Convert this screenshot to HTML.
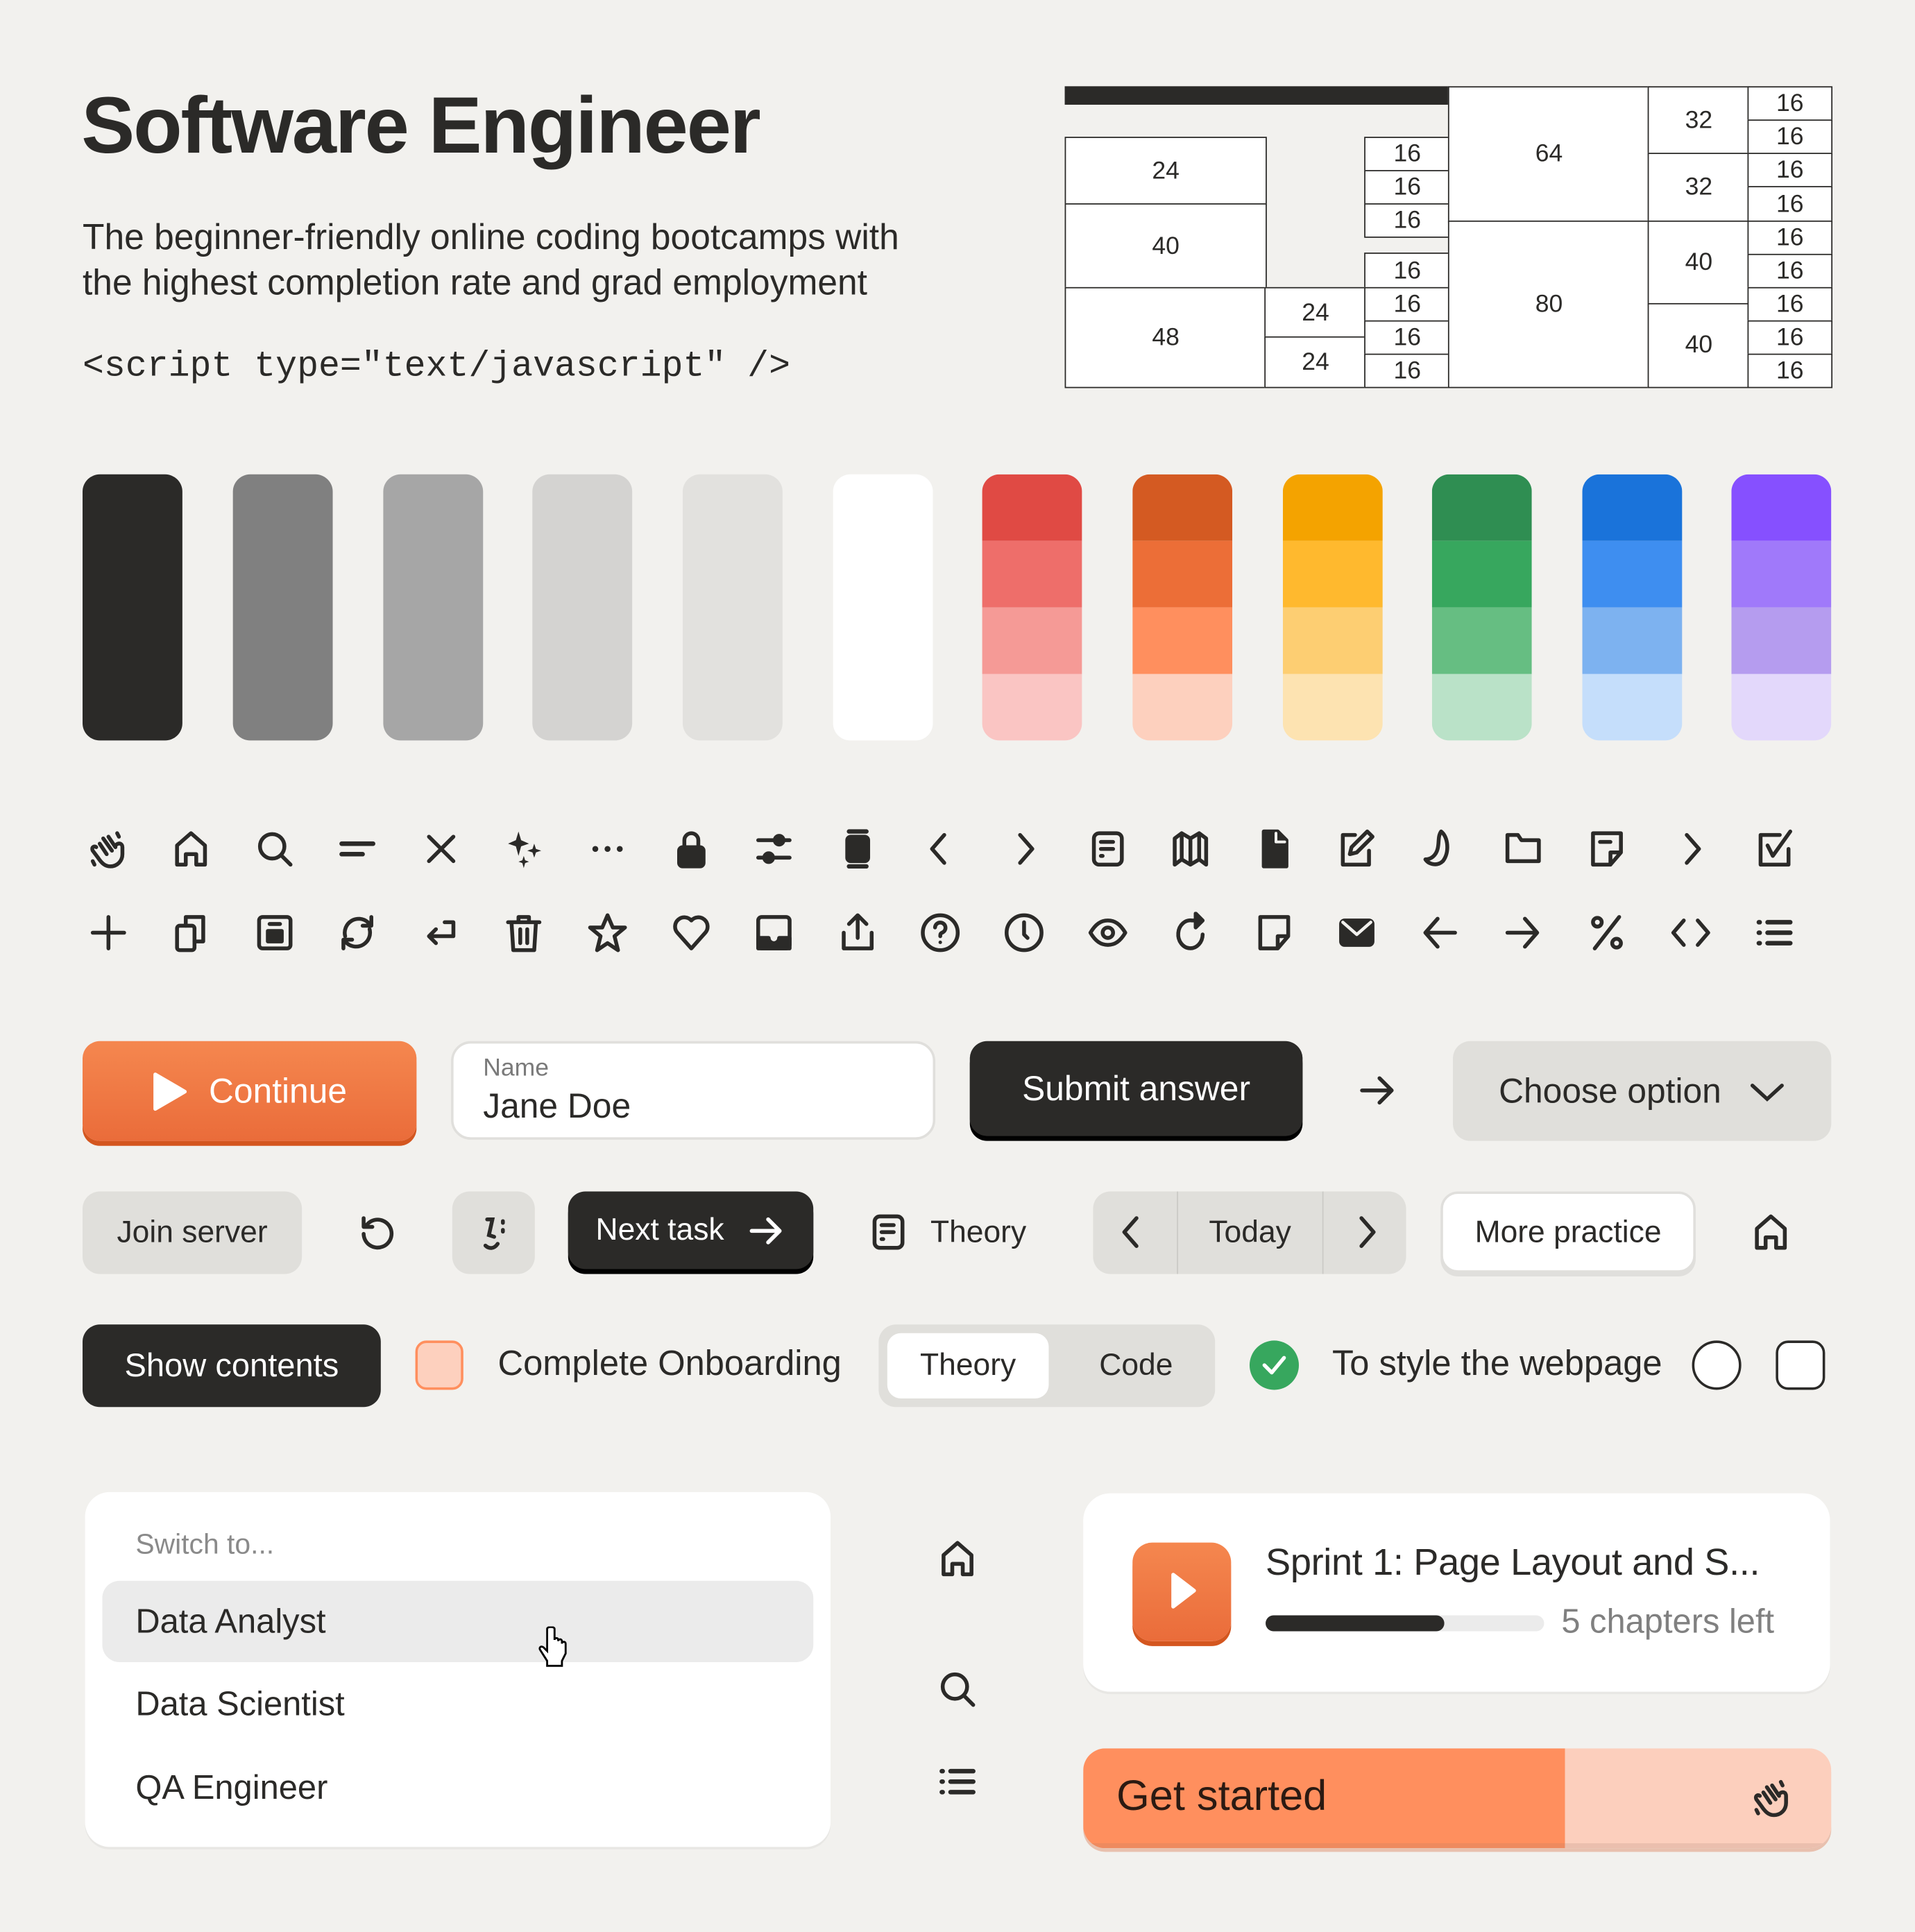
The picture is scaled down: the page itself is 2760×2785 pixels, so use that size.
<!DOCTYPE html>
<html><head><meta charset="utf-8">
<style>
*{box-sizing:border-box;margin:0;padding:0}
html,body{width:2760px;height:2784px;overflow:hidden;background:#F2F1EE}
#s{position:absolute;left:0;top:0;width:1554px;height:1568px;transform:scale(1.7761);transform-origin:0 0;font-family:"Liberation Sans",sans-serif;color:#2B2A28}
.a{position:absolute}
.c{position:absolute;border:1.6px solid #2B2A28;background:#fff;display:flex;align-items:center;justify-content:center;font-size:20px}
.sw{position:absolute;top:385px;width:81px;height:216px;border-radius:14px;overflow:hidden}
.sw div{height:54px}
.ic{position:absolute;width:34px;height:34px;margin:-17px 0 0 -17px}
.ic svg{width:34px;height:34px;fill:none;stroke:#2B2A28;stroke-width:2.2;stroke-linecap:round;stroke-linejoin:round}
.f{fill:#2B2A28!important}
.btn{position:absolute;display:flex;align-items:center;justify-content:center;border-radius:14px;font-size:26px}
</style></head><body><div id="s">
<div class="a" style="left:66px;top:64px;font-size:65px;font-weight:bold;letter-spacing:-1.2px">Software Engineer</div>
<div class="a" style="left:67px;top:175px;font-size:29px;line-height:37px">The beginner-friendly online coding bootcamps with<br>the highest completion rate and grad employment</div>
<div class="a" style="left:67px;top:281px;font-family:'Liberation Mono',monospace;font-size:29px">&lt;script type="text/javascript" /&gt;</div>

<div class="a" style="left:864px;top:70px;width:312px;height:15px;background:#2B2A28"></div>
<div class="c" style="left:864px;top:111px;width:164px;height:56px">24</div>
<div class="c" style="left:864px;top:165px;width:164px;height:70px">40</div>
<div class="c" style="left:864px;top:233px;width:164px;height:82px">48</div>
<div class="c" style="left:1026px;top:233px;width:83px;height:42px">24</div>
<div class="c" style="left:1026px;top:273px;width:83px;height:42px">24</div>
<div class="c" style="left:1107px;top:111px;width:70px;height:29px">16</div>
<div class="c" style="left:1107px;top:138px;width:70px;height:29px">16</div>
<div class="c" style="left:1107px;top:165px;width:70px;height:28px">16</div>
<div class="c" style="left:1107px;top:205px;width:70px;height:30px">16</div>
<div class="c" style="left:1107px;top:233px;width:70px;height:29px">16</div>
<div class="c" style="left:1107px;top:260px;width:70px;height:29px">16</div>
<div class="c" style="left:1107px;top:287px;width:70px;height:28px">16</div>
<div class="c" style="left:1175px;top:70px;width:164px;height:111px">64</div>
<div class="c" style="left:1175px;top:179px;width:164px;height:136px">80</div>
<div class="c" style="left:1337px;top:70px;width:83px;height:56px">32</div>
<div class="c" style="left:1337px;top:124px;width:83px;height:57px">32</div>
<div class="c" style="left:1337px;top:179px;width:83px;height:69px">40</div>
<div class="c" style="left:1337px;top:246px;width:83px;height:69px">40</div>
<div class="c" style="left:1418px;top:70px;width:69px;height:29px">16</div>
<div class="c" style="left:1418px;top:97px;width:69px;height:29px">16</div>
<div class="c" style="left:1418px;top:124px;width:69px;height:29px">16</div>
<div class="c" style="left:1418px;top:151px;width:69px;height:30px">16</div>
<div class="c" style="left:1418px;top:179px;width:69px;height:29px">16</div>
<div class="c" style="left:1418px;top:206px;width:69px;height:29px">16</div>
<div class="c" style="left:1418px;top:233px;width:69px;height:29px">16</div>
<div class="c" style="left:1418px;top:260px;width:69px;height:29px">16</div>
<div class="c" style="left:1418px;top:287px;width:69px;height:28px">16</div>

<div class="sw" style="left:67px;background:#2B2A28"></div>
<div class="sw" style="left:189px;background:#808080"></div>
<div class="sw" style="left:311px;background:#A6A6A6"></div>
<div class="sw" style="left:432px;background:#D4D3D1"></div>
<div class="sw" style="left:554px;background:#E2E1DE"></div>
<div class="sw" style="left:676px;background:#FFFFFF"></div>
<div class="sw" style="left:797px"><div style="background:#E04A44"></div><div style="background:#EE6E6A"></div><div style="background:#F59A96"></div><div style="background:#FAC5C3"></div></div>
<div class="sw" style="left:919px"><div style="background:#D45A22"></div><div style="background:#EC6E37"></div><div style="background:#FF8F5E"></div><div style="background:#FDD0BE"></div></div>
<div class="sw" style="left:1041px"><div style="background:#F4A300"></div><div style="background:#FFB92E"></div><div style="background:#FDCE72"></div><div style="background:#FDE3B1"></div></div>
<div class="sw" style="left:1162px"><div style="background:#2F8E52"></div><div style="background:#37A75E"></div><div style="background:#66BE82"></div><div style="background:#BAE2C8"></div></div>
<div class="sw" style="left:1284px"><div style="background:#1A73DA"></div><div style="background:#3E8EF0"></div><div style="background:#7DB2F0"></div><div style="background:#C5DEFB"></div></div>
<div class="sw" style="left:1405px"><div style="background:#8650FF"></div><div style="background:#A079FA"></div><div style="background:#B59CEF"></div><div style="background:#E3D8FB"></div></div>

<!-- icons row 1 -->
<div class="ic" style="left:88px;top:689px"><svg viewBox="0 0 24 24"><path d="M7 9l4 6M9 6l5 7M12 5l4 6M16 10c2-2 4-1 4 1v4c0 4-3 7-7 7-3 0-5-2-7-5l-3-4c-1-2 1-3 2-2M17 3l1 2M3 19l1 2"/></svg></div>
<div class="ic" style="left:155px;top:689px"><svg viewBox="0 0 24 24"><path d="M4 21V10l8-7 8 7v11h-5v-6h-6v6z"/></svg></div>
<div class="ic" style="left:223px;top:689px"><svg viewBox="0 0 24 24"><circle cx="10.5" cy="10.5" r="7"/><path d="M16 16l5 5"/></svg></div>
<div class="ic" style="left:290px;top:689px"><svg viewBox="0 0 24 24"><path d="M3 9h18M3 15h12" stroke-width="2.6"/></svg></div>
<div class="ic" style="left:358px;top:689px"><svg viewBox="0 0 24 24"><path d="M5 5l14 14M19 5L5 19"/></svg></div>
<div class="ic" style="left:425px;top:689px"><svg viewBox="0 0 24 24"><path class="f" d="M9 2l1.5 5L15 9l-4.5 1.5L9 16l-1.5-5.5L3 9l4.5-2zM18 9l1 3 3 1-3 1-1 3-1-3-3-1 3-1zM12 16l.8 2.5 2.2.8-2.2.8L12 23l-.8-2.9-2.2-.8 2.2-.8z" stroke="none"/></svg></div>
<div class="ic" style="left:493px;top:689px"><svg viewBox="0 0 24 24"><circle class="f" cx="5" cy="12" r="1.7" stroke="none"/><circle class="f" cx="12" cy="12" r="1.7" stroke="none"/><circle class="f" cx="19" cy="12" r="1.7" stroke="none"/></svg></div>
<div class="ic" style="left:561px;top:689px"><svg viewBox="0 0 24 24"><rect class="f" x="5" y="11" width="14" height="11" rx="2"/><path d="M8 11V7a4 4 0 0 1 8 0v4"/></svg></div>
<div class="ic" style="left:628px;top:689px"><svg viewBox="0 0 24 24"><path d="M3 7h18M3 17h18"/><circle class="f" cx="15" cy="7" r="2.5"/><circle class="f" cx="9" cy="17" r="2.5"/></svg></div>
<div class="ic" style="left:696px;top:689px"><svg viewBox="0 0 24 24"><rect class="f" x="6" y="5" width="12" height="14" rx="2"/><path d="M7 2h10M7 22h10" stroke-width="2.5"/></svg></div>
<div class="ic" style="left:762px;top:689px"><svg viewBox="0 0 24 24"><path d="M15 4l-7 8 7 8"/></svg></div>
<div class="ic" style="left:832px;top:689px"><svg viewBox="0 0 24 24"><path d="M9 4l7 8-7 8"/></svg></div>
<div class="ic" style="left:899px;top:689px"><svg viewBox="0 0 24 24"><rect x="4" y="3" width="16" height="18" rx="3"/><path d="M8 8h7M8 12h7M8 16h1"/></svg></div>
<div class="ic" style="left:966px;top:689px"><svg viewBox="0 0 24 24"><path d="M3 6l4-3 5 3 5-3 4 3v15l-4-3-5 3-5-3-4 3z M7 3v15M17 3v15M12 6v15"/></svg></div>
<div class="ic" style="left:1034px;top:689px"><svg viewBox="0 0 24 24"><path class="f" d="M6 2h8l5 5v15H6z"/><path d="M13 3v5h5" stroke="#F2F1EE" stroke-width="1.6"/></svg></div>
<div class="ic" style="left:1101px;top:689px"><svg viewBox="0 0 24 24"><path d="M11 4H4v17h15v-8M18 2l3 3-9 9-4 1 1-4z"/></svg></div>
<div class="ic" style="left:1168px;top:689px"><svg viewBox="0 0 24 24"><path d="M13 2c4 3 5 12 1 17-3 3-8 2-10-1 3 0 6-2 7-6 1-4 0-7 2-10z"/></svg></div>
<div class="ic" style="left:1236px;top:689px"><svg viewBox="0 0 24 24"><path d="M3 4h6l2 3h10v12H3z"/></svg></div>
<div class="ic" style="left:1304px;top:689px"><svg viewBox="0 0 24 24"><path d="M14 21H4V3h16v11l-6 7v-7h6M8 8h6"/></svg></div>
<div class="ic" style="left:1373px;top:689px"><svg viewBox="0 0 24 24"><path d="M9 4l7 8-7 8"/></svg></div>
<div class="ic" style="left:1440px;top:689px"><svg viewBox="0 0 24 24"><path d="M20 12v9H4V4h11M8 10l3 6 10-14"/></svg></div>
<!-- row 2 -->
<div class="ic" style="left:88px;top:757px"><svg viewBox="0 0 24 24"><path d="M12 3v18M3 12h18"/></svg></div>
<div class="ic" style="left:155px;top:757px"><svg viewBox="0 0 24 24"><rect x="4" y="8" width="10" height="14" rx="1.5"/><path d="M9 8V3h10v14h-5"/></svg></div>
<div class="ic" style="left:223px;top:757px"><svg viewBox="0 0 24 24"><rect x="3" y="3" width="18" height="18" rx="2"/><rect class="f" x="8" y="11" width="8" height="6"/><path d="M9 7h6"/></svg></div>
<div class="ic" style="left:290px;top:757px"><svg viewBox="0 0 24 24"><path d="M5 14a8 8 0 0 1 13-8l2 2M19 10a8 8 0 0 1-13 8l-2-2M20 3v5h-5M4 21v-5h5"/></svg></div>
<div class="ic" style="left:358px;top:757px"><svg viewBox="0 0 24 24"><path d="M14 6h5v8H5M9 10l-4 4 4 4"/></svg></div>
<div class="ic" style="left:425px;top:757px"><svg viewBox="0 0 24 24"><path d="M3 6h18M9 6V3h6v3M5 6l1 16h12l1-16M10 10v8M14 10v8"/></svg></div>
<div class="ic" style="left:493px;top:757px"><svg viewBox="0 0 24 24"><path d="M12 2l3 7h7l-6 5 2 8-6-4-6 4 2-8-6-5h7z"/></svg></div>
<div class="ic" style="left:561px;top:757px"><svg viewBox="0 0 24 24"><path d="M12 21L4 12a5 5 0 0 1 8-7 5 5 0 0 1 8 7z"/></svg></div>
<div class="ic" style="left:628px;top:757px"><svg viewBox="0 0 24 24"><rect x="3" y="3" width="18" height="18" rx="2"/><path class="f" d="M3 15h6a3 3 0 0 0 6 0h6v6H3z"/></svg></div>
<div class="ic" style="left:696px;top:757px"><svg viewBox="0 0 24 24"><path d="M4 12v9h16v-9M12 15V2M7 7l5-5 5 5"/></svg></div>
<div class="ic" style="left:763px;top:757px"><svg viewBox="0 0 24 24"><circle cx="12" cy="12" r="10"/><path d="M9 9a3 3 0 1 1 4 3c-1 .5-1 1-1 2"/><circle class="f" cx="12" cy="17.5" r="1" stroke="none"/></svg></div>
<div class="ic" style="left:831px;top:757px"><svg viewBox="0 0 24 24"><circle cx="12" cy="12" r="10"/><path d="M12 6v7l2 2"/></svg></div>
<div class="ic" style="left:899px;top:757px"><svg viewBox="0 0 24 24"><path d="M2 12c3-5 6-7 10-7s7 2 10 7c-3 5-6 7-10 7s-7-2-10-7z"/><circle cx="12" cy="12" r="3"/></svg></div>
<div class="ic" style="left:966px;top:757px"><svg viewBox="0 0 24 24"><path d="M19 13a7 8 0 1 1-6-8h3"/><path class="f" d="M15 1l4 4-4 4z"/></svg></div>
<div class="ic" style="left:1034px;top:757px"><svg viewBox="0 0 24 24"><path d="M14 21H4V3h16v11l-6 7v-7h6"/></svg></div>
<div class="ic" style="left:1101px;top:757px"><svg viewBox="0 0 24 24"><rect class="f" x="3" y="5" width="18" height="14" rx="2"/><path d="M4 6l8 7 8-7" stroke="#F2F1EE" stroke-width="1.8"/></svg></div>
<div class="ic" style="left:1168px;top:757px"><svg viewBox="0 0 24 24"><path d="M21 12H4M11 4l-7 8 7 8"/></svg></div>
<div class="ic" style="left:1236px;top:757px"><svg viewBox="0 0 24 24"><path d="M3 12h17M13 4l7 8-7 8"/></svg></div>
<div class="ic" style="left:1304px;top:757px"><svg viewBox="0 0 24 24"><path d="M19 3L5 21"/><circle cx="6.5" cy="6" r="2.5"/><circle cx="17.5" cy="18" r="2.5"/></svg></div>
<div class="ic" style="left:1372px;top:757px"><svg viewBox="0 0 24 24"><path d="M8 5l-6 7 6 7M16 5l6 7-6 7"/></svg></div>
<div class="ic" style="left:1440px;top:757px"><svg viewBox="0 0 24 24"><path d="M8 6h13M8 12h13M8 18h13M3 6h.5M3 12h.5M3 18h.5" stroke-width="2.6"/></svg></div>

<!-- buttons row 1 -->
<div class="btn" style="left:67px;top:845px;width:271px;height:81px;background:linear-gradient(#F5874F,#EA6C3A);box-shadow:0 4px 0 #D4561F;color:#fff;font-size:28px"><svg width="30" height="32" viewBox="0 0 30 32" style="margin-right:16px"><path d="M3 2l24 14L3 30z" fill="#fff" stroke="#fff" stroke-width="3" stroke-linejoin="round"/></svg>Continue</div>
<div class="a" style="left:366px;top:845px;width:393px;height:80px;background:#fff;border:2px solid #E0DFDC;border-radius:16px"></div>
<div class="a" style="left:392px;top:856px;font-size:20px;color:#7A7A7A">Name</div>
<div class="a" style="left:392px;top:882px;font-size:28px">Jane Doe</div>
<div class="btn" style="left:787px;top:845px;width:270px;height:77px;background:#2B2A28;box-shadow:0 4px 0 #000;color:#fff;font-size:28px">Submit answer</div>
<div class="ic" style="left:1118px;top:885px"><svg viewBox="0 0 24 24"><path d="M3 12h17M13 5l7 7-7 7"/></svg></div>
<div class="btn" style="left:1179px;top:845px;width:307px;height:81px;background:#E0DFDB;font-size:28px">Choose option<svg width="30" height="20" viewBox="0 0 30 20" style="margin-left:22px"><path d="M3 5l12 11 12-11" fill="none" stroke="#2B2A28" stroke-width="3" stroke-linecap="round"/></svg></div>

<!-- row 2 -->
<div class="btn" style="left:67px;top:967px;width:178px;height:67px;background:#E0DFDB;font-size:25px">Join server</div>
<div class="ic" style="left:305px;top:1000px"><svg viewBox="0 0 24 24"><path d="M6 9a8 8 0 1 1-1 4M5 4v5h5"/></svg></div>
<div class="btn" style="left:367px;top:967px;width:67px;height:67px;background:#E0DFDB"><svg width="34" height="34" viewBox="0 0 24 24" fill="none" stroke="#2B2A28" stroke-width="2.2" stroke-linecap="round"><path d="M8 4h3l-2 9 3 1M7 19c2 2 5 2 7-1M17 5v1M17 10v1"/></svg></div>
<div class="btn" style="left:461px;top:967px;width:199px;height:63px;background:#2B2A28;box-shadow:0 4px 0 #000;color:#fff;font-size:25px">Next task<svg width="32" height="32" viewBox="0 0 24 24" fill="none" stroke="#fff" stroke-width="2.4" stroke-linecap="round" stroke-linejoin="round" style="margin-left:18px"><path d="M3 12h17M13 5l7 7-7 7"/></svg></div>
<div class="ic" style="left:721px;top:1000px"><svg viewBox="0 0 24 24"><rect x="4" y="3" width="16" height="18" rx="3"/><path d="M8 8h7M8 12h7M8 16h1"/></svg></div>
<div class="a" style="left:755px;top:986px;font-size:25px">Theory</div>
<div class="a" style="left:887px;top:967px;width:254px;height:67px;background:#E0DFDB;border-radius:14px"></div>
<div class="a" style="left:955px;top:967px;width:1px;height:67px;background:#CBCAC6"></div>
<div class="a" style="left:1073px;top:967px;width:1px;height:67px;background:#CBCAC6"></div>
<div class="ic" style="left:918px;top:1000px"><svg viewBox="0 0 24 24"><path d="M15 4l-7 8 7 8"/></svg></div>
<div class="a" style="left:981px;top:986px;font-size:25px">Today</div>
<div class="ic" style="left:1109px;top:1000px"><svg viewBox="0 0 24 24"><path d="M9 4l7 8-7 8"/></svg></div>
<div class="btn" style="left:1169px;top:967px;width:207px;height:66px;background:#fff;border:2px solid #E0DFDC;box-shadow:0 3px 0 #E0DFDC;font-size:25px">More practice</div>
<div class="ic" style="left:1437px;top:1000px"><svg viewBox="0 0 24 24"><path d="M4 21V10l8-7 8 7v11h-5v-6h-6v6z"/></svg></div>

<!-- row 3 -->
<div class="btn" style="left:67px;top:1075px;width:242px;height:67px;background:#2B2A28;color:#fff;font-size:26.5px">Show contents</div>
<div class="a" style="left:337px;top:1088px;width:39px;height:40px;border:2px solid #FF8F5E;background:#FDD0BE;border-radius:9px"></div>
<div class="a" style="left:404px;top:1091px;font-size:28.5px">Complete Onboarding</div>
<div class="a" style="left:713px;top:1075px;width:273px;height:67px;background:#E0DFDB;border-radius:14px"></div>
<div class="btn" style="left:720px;top:1082px;width:131px;height:53px;background:#fff;border-radius:11px;font-size:25px">Theory</div>
<div class="a" style="left:892px;top:1094px;font-size:25px">Code</div>
<div class="a" style="left:1014px;top:1088px;width:40px;height:40px;border-radius:50%;background:#37A75E"><svg width="40" height="40" viewBox="0 0 40 40"><path d="M12 20l6 6 10-12" fill="none" stroke="#fff" stroke-width="3" stroke-linecap="round" stroke-linejoin="round"/></svg></div>
<div class="a" style="left:1081px;top:1091px;font-size:28.5px">To style the webpage</div>
<div class="a" style="left:1373px;top:1088px;width:40px;height:40px;border-radius:50%;border:2.5px solid #2B2A28;background:#fff"></div>
<div class="a" style="left:1441px;top:1088px;width:40px;height:40px;border-radius:10px;border:2.5px solid #2B2A28;background:#fff"></div>

<!-- list card -->
<div class="a" style="left:69px;top:1211px;width:605px;height:288px;background:#fff;border-radius:20px;box-shadow:0 2px 0 #E8E7E4"></div>
<div class="a" style="left:110px;top:1240px;font-size:23px;color:#8A8A8A">Switch to...</div>
<div class="a" style="left:83px;top:1283px;width:577px;height:66px;background:#EBEBEB;border-radius:14px"></div>
<div class="a" style="left:110px;top:1300px;font-size:27.5px">Data Analyst</div>
<div class="a" style="left:110px;top:1367px;font-size:27.5px">Data Scientist</div>
<div class="a" style="left:110px;top:1435px;font-size:27.5px">QA Engineer</div>
<svg class="a" style="left:436px;top:1320px" width="28" height="34" viewBox="0 0 14 17"><path d="M4 1v9l-1.5-1.5c-1-.8-2 .2-1.3 1.1L4 14v2h6v-2l1.5-3V7c0-1-1.5-1-1.5 0V6c0-1-1.5-1-1.5 0V5.5C8.5 4.5 7 4.5 7 5.5V1C7 0 4 0 4 1z" fill="#fff" stroke="#000" stroke-width="0.8"/></svg>

<div class="ic" style="left:777px;top:1265px"><svg viewBox="0 0 24 24"><path d="M4 21V10l8-7 8 7v11h-5v-6h-6v6z"/></svg></div>
<div class="ic" style="left:777px;top:1371px"><svg viewBox="0 0 24 24"><circle cx="10.5" cy="10.5" r="7"/><path d="M16 16l5 5"/></svg></div>
<div class="ic" style="left:777px;top:1446px"><svg viewBox="0 0 24 24"><path d="M8 6h13M8 12h13M8 18h13M3 6h.5M3 12h.5M3 18h.5" stroke-width="2.6"/></svg></div>

<!-- sprint card -->
<div class="a" style="left:879px;top:1212px;width:606px;height:161px;background:#fff;border-radius:22px;box-shadow:0 2px 0 #E8E7E4"></div>
<div class="a" style="left:919px;top:1252px;width:80px;height:80px;border-radius:16px;background:linear-gradient(#F5874F,#EA6C3A);box-shadow:0 4px 0 #D4561F"><svg width="80" height="76" viewBox="0 0 80 76"><path d="M33 26v26l17-13z" fill="#fff" stroke="#fff" stroke-width="3" stroke-linejoin="round"/></svg></div>
<div class="a" style="left:1027px;top:1251px;font-size:30.5px;letter-spacing:-0.2px">Sprint 1: Page Layout and S...</div>
<div class="a" style="left:1027px;top:1311px;width:226px;height:13px;background:#EBEBEB;border-radius:7px"></div>
<div class="a" style="left:1027px;top:1311px;width:145px;height:13px;background:#2B2A28;border-radius:7px"></div>
<div class="a" style="left:1267px;top:1300px;font-size:27.5px;color:#808080">5 chapters left</div>

<!-- get started -->
<div class="a" style="left:879px;top:1419px;width:607px;height:81px;border-radius:18px;overflow:hidden;box-shadow:0 3px 0 #E8C0AE">
<div class="a" style="left:0;top:0;width:391px;height:81px;background:#FF8F5E;border-bottom:4px solid #EE8A5F"></div>
<div class="a" style="left:391px;top:0;width:216px;height:81px;background:#FCCFBD;border-bottom:4px solid #EBBFAE"></div></div>
<div class="a" style="left:906px;top:1439px;font-size:34.5px;color:#2B1A12">Get started</div>
<div class="ic" style="left:1438px;top:1459px"><svg viewBox="0 0 24 24"><path d="M7 9l4 6M9 6l5 7M12 5l4 6M16 10c2-2 4-1 4 1v4c0 4-3 7-7 7-3 0-5-2-7-5l-3-4c-1-2 1-3 2-2M17 3l1 2M3 19l1 2"/></svg></div>
</div></body></html>
